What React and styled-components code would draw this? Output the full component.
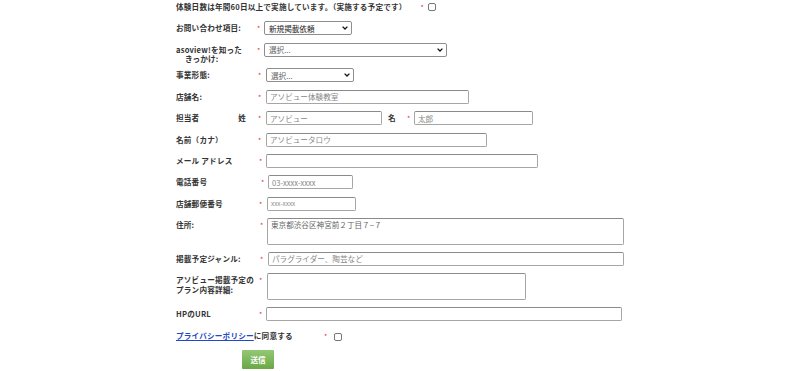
import React from 'react'
import styled, { createGlobalStyle } from 'styled-components'

const GlobalStyle = createGlobalStyle`
  html, body {
    margin: 0;
    padding: 0;
    background: #fff;
  }
  body {
    font-family: "Noto Sans CJK JP", "Noto Sans", sans-serif;
    color: #333;
  }
`

function Chevron() {
  return (
    <svg width="6" height="4" viewBox="0 0 6 4">
      <path d="M0.6 0.6 L3 3 L5.4 0.6" fill="none" stroke="#111" strokeWidth="1.3" />
    </svg>
  )
}

function Select({ width, value, muted }) {
  return (
    <SelectWrap $w={width}>
      <SelectBox $muted={muted} defaultValue={value}>
        <option>{value}</option>
      </SelectBox>
      <ChevronSlot>
        <Chevron />
      </ChevronSlot>
    </SelectWrap>
  )
}

export default function App() {
  return (
    <>
      <GlobalStyle />
      <Form>
        <Row>
          <Label as="span">体験日数は年間60日以上で実施しています。（実施する予定です）</Label>
          <Star $ml={14}>*</Star>
          <Check type="checkbox" $mt={3} />
        </Row>

        <Row>
          <Label $w={81}>お問い合わせ項目:</Label>
          <Star>*</Star>
          <Select width={88} value="新規掲載依頼" />
        </Row>

        <Row $mb={4.4}>
          <Label $w={81}>
            asoview!を知った
            <Indent>きっかけ:</Indent>
          </Label>
          <Star>*</Star>
          <Select width={183} value="選択..." muted />
        </Row>

        <Row>
          <Label $w={82}>事業形態:</Label>
          <Star $fw={8}>*</Star>
          <Select width={88} value="選択..." muted />
        </Row>

        <Row>
          <Label $w={82}>店舗名:</Label>
          <Star $fw={8}>*</Star>
          <TextInput $w={203} placeholder="アソビュー体験教室" />
        </Row>

        <Row>
          <SplitLabel $w={82}>
            <span>担当者</span>
            <span>姓</span>
          </SplitLabel>
          <Star $fw={8}>*</Star>
          <TextInput $w={116} placeholder="アソビュー" />
          <InlineLabel>名</InlineLabel>
          <Star>*</Star>
          <TextInput $w={119} placeholder="太郎" />
        </Row>

        <Row>
          <Label $w={82}>名前（カナ）</Label>
          <Star $fw={8}>*</Star>
          <TextInput $w={221} placeholder="アソビュータロウ" />
        </Row>

        <Row>
          <Label $w={83}>メール アドレス</Label>
          <Star>*</Star>
          <TextInput $w={272} />
        </Row>

        <Row>
          <Label $w={85}>電話番号</Label>
          <Star>*</Star>
          <TextInput $w={85} placeholder="03-xxxx-xxxx" />
        </Row>

        <Row>
          <Label $w={83}>店舗郵便番号</Label>
          <Star $fw={8}>*</Star>
          <TextInput $w={89} $small placeholder="xxx-xxxx" />
        </Row>

        <Row>
          <Label $w={84}>住所:</Label>
          <Star>*</Star>
          <TextArea $w={357} placeholder="東京都渋谷区神宮前２丁目７−７" />
        </Row>

        <Row>
          <Label $w={84}>掲載予定ジャンル:</Label>
          <Star $fw={8}>*</Star>
          <TextInput $w={356} placeholder="パラグライダー、陶芸など" />
        </Row>

        <Row>
          <Label $w={83}>
            アソビュー掲載予定の
            <br />
            プラン内容詳細:
          </Label>
          <Star $fw={8}>*</Star>
          <TextArea $w={259} />
        </Row>

        <Row>
          <Label $w={83}>HPのURL</Label>
          <Star>*</Star>
          <TextInput $w={356} />
        </Row>

        <Row>
          <Label $w={148}>
            <PolicyLink href="#">プライバシーポリシー</PolicyLink>に同意する
          </Label>
          <Star $fw={10}>*</Star>
          <Check type="checkbox" $mt={4} />
        </Row>

        <Row>
          <SubmitButton type="button">送信</SubmitButton>
        </Row>
      </Form>
    </>
  )
}

const Form = styled.form`
  padding-left: 176px;
  padding-top: 0;
  width: 600px;
`

const Row = styled.div`
  display: flex;
  align-items: flex-start;
  min-height: 14px;
  margin-bottom: ${p => (p.$mb != null ? p.$mb : 7.4)}px;
`

const Label = styled.div`
  flex: none;
  width: ${p => (p.$w ? `${p.$w}px` : 'auto')};
  padding-top: 2px;
  font-size: 7.6px;
  line-height: 9.6px;
  letter-spacing: 0.2px;
  font-weight: 700;
  color: #333;
  white-space: nowrap;
`

const SplitLabel = styled(Label)`
  display: flex;
  justify-content: space-between;
  padding-right: 12px;
  box-sizing: border-box;
`

const InlineLabel = styled(Label)`
  margin-left: 6px;
  width: 19px;
`

const Indent = styled.span`
  display: block;
  padding-left: 9px;
`

const Star = styled.span`
  flex: none;
  width: ${p => (p.$fw ? `${p.$fw}px` : '7px')};
  margin-left: ${p => (p.$ml ? `${p.$ml}px` : '0')};
  color: #e03030;
  font-size: 7px;
  line-height: 14px;
`

const SelectWrap = styled.div`
  position: relative;
  flex: none;
  width: ${p => p.$w}px;
  height: 14px;
`

const SelectBox = styled.select`
  display: block;
  appearance: none;
  width: 100%;
  height: 14px;
  box-sizing: border-box;
  margin: 0;
  padding: 0 10px 0 4px;
  border: 1px solid #8e8e8e;
  border-radius: 2px;
  background: #fff;
  font-family: inherit;
  font-size: 7.6px;
  color: ${p => (p.$muted ? '#666' : '#222')};
  outline: none;
`

const ChevronSlot = styled.span`
  position: absolute;
  right: 4px;
  top: 5px;
  display: flex;
  pointer-events: none;
`

const TextInput = styled.input`
  display: block;
  flex: none;
  width: ${p => p.$w}px;
  height: 14px;
  box-sizing: border-box;
  margin: 0;
  padding: 0 3px;
  border: 1px solid #a6a6a6;
  border-top-color: #8a8a8a;
  border-radius: 2px;
  background: #fff;
  font-family: inherit;
  font-size: ${p => (p.$small ? '6.4px' : '7.6px')};
  color: #333;
  outline: none;

  &::placeholder {
    color: #888;
  }
`

const TextArea = styled.textarea`
  display: block;
  flex: none;
  width: ${p => p.$w}px;
  height: 26.5px;
  box-sizing: border-box;
  margin: 0;
  padding: 1px 3px;
  border: 1px solid #a6a6a6;
  border-top-color: #8a8a8a;
  border-radius: 2px;
  background: #fff;
  font-family: inherit;
  font-size: 7.6px;
  line-height: 9px;
  resize: none;
  outline: none;

  &::placeholder {
    color: #666;
  }
`

const Check = styled.input`
  appearance: none;
  display: block;
  flex: none;
  width: 8px;
  height: 8px;
  margin: ${p => p.$mt}px 0 0 0;
  box-sizing: border-box;
  border: 1px solid #767676;
  border-radius: 2px;
  background: #fff;
`

const PolicyLink = styled.a`
  color: #2148c9;
  text-decoration: underline;
`

const SubmitButton = styled.button`
  display: block;
  margin: 0 0 0 66px;
  width: 32px;
  height: 19px;
  padding: 0;
  border: 0;
  border-radius: 1px;
  background: linear-gradient(to bottom, #93c873, #6ba746);
  color: #fff;
  font-family: inherit;
  font-size: 7.6px;
  font-weight: 700;
  cursor: pointer;
`
